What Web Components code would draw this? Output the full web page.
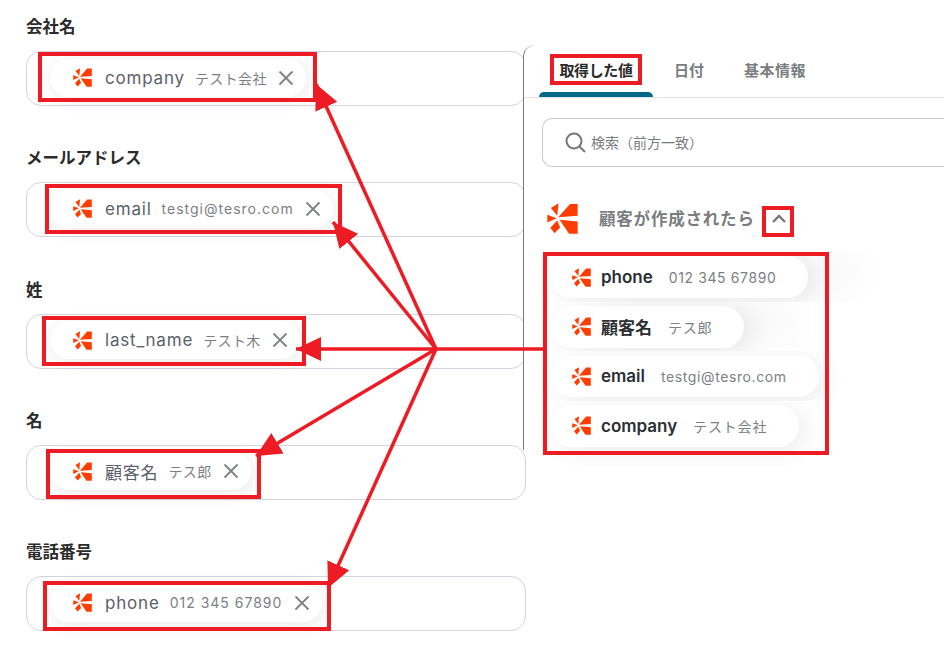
<!DOCTYPE html>
<html lang="ja">
<head>
<meta charset="utf-8">
<title>取得した値</title>
<style>
  html, body { margin: 0; padding: 0; background: #fff; }
  body {
    width: 944px;
    height: 656px;
    overflow: hidden;
    font-family: Inter, "Noto Sans CJK JP", sans-serif;
  }
</style>
</head>
<body>
<mapping-page>
  <field-list slot="left">
    <form-field label="会社名" inset="23"><value-chip name="company" value="テスト会社" removable></value-chip></form-field>
    <form-field label="メールアドレス" inset="23"><value-chip name="email" value="testgi@tesro.com" removable></value-chip></form-field>
    <form-field label="姓" inset="23"><value-chip name="last_name" value="テスト木" removable></value-chip></form-field>
    <form-field label="名" inset="23"><value-chip name="顧客名" value="テス郎" removable></value-chip></form-field>
    <form-field label="電話番号" inset="23"><value-chip name="phone" value="012 345 67890" removable></value-chip></form-field>
  </field-list>
  <output-panel slot="right">
    <value-chip name="phone" value="012 345 67890" strong wide></value-chip>
    <value-chip name="顧客名" value="テス郎" strong wide></value-chip>
    <value-chip name="email" value="testgi@tesro.com" strong></value-chip>
    <value-chip name="company" value="テスト会社" strong></value-chip>
  </output-panel>
</mapping-page>
<annotation-layer></annotation-layer>

<script>
  // ロゴは共通で使う
  class BrandMark extends HTMLElement {
    constructor() {
      super();
      const shadow = this.attachShadow({ mode: 'open' });
      const size = this.getAttribute('size') || 18;
      shadow.innerHTML = `
        <style>
          :host { display: inline-flex; flex: none; width: ${size}px; height: ${size}px; }
          svg { width: 100%; height: 100%; display: block; }
        </style>
        <svg viewBox="18 26 94 94" fill="#ff3d00">
          <polygon points="52,69 88,29 111,29 111,65"/>
          <polygon points="56,77 111,82 111,119 85,119"/>
          <polygon points="49,65 30,41 53,27"/>
          <polygon points="19,62 47,72 19,85"/>
          <polygon points="49,79 58,100 41,118 28,101"/>
        </svg>`;
    }
  }
  customElements.define('brand-mark', BrandMark);

  class ValueChip extends HTMLElement {
    constructor() {
      super();
      const shadow = this.attachShadow({ mode: 'open' });
      const removable = this.hasAttribute('removable');
      const strong = this.hasAttribute('strong');
      const value = this.getAttribute('value');
      // 英数字の値だけ字間を広げる
      const latin = /^[\x20-\x7e]+$/.test(value);
      const valueSpacing = latin ? (strong ? .6 : 1) : (strong ? .8 : .4);
      const shadowCss = strong
        ? `6px 4px 24px rgba(0, 0, 0, .08)${this.hasAttribute('wide') ? ', 50px -6px 40px rgba(0, 0, 0, .04)' : ''}`
        : '2px 3px 18px rgba(0, 0, 0, .09)';
      shadow.innerHTML = `
        <style>
          :host { display: inline-flex; }
          /* 右の一覧は行ごとに影が切れる */
          :host([strong]) {
            display: flex;
            overflow: hidden;
            padding: 4px 0 3.5px 17px;
          }
          :host([strong]:last-child) { padding-bottom: 20px; }
          .chip {
            display: inline-flex;
            align-items: center;
            background: #fff;
            border-radius: 22px;
            white-space: nowrap;
            height: ${strong ? 42 : 38}px;
            padding: 0 ${removable ? 11 : 32}px 0 ${strong ? 21 : 23}px;
            box-shadow: ${shadowCss};
          }
          .name {
            margin-left: ${strong ? 10 : 13}px;
            font-size: 17px;
            letter-spacing: ${strong ? 0 : .8}px;
            font-weight: ${strong ? 600 : 400};
            color: ${strong ? '#2b2f33' : '#5a6068'};
          }
          .value {
            margin-left: ${strong ? 16 : 10}px;
            font-size: 14px;
            letter-spacing: ${valueSpacing}px;
            color: #7b7f84;
          }
          svg { margin-left: 10.500px; width: 18px; height: 18px; display: block; }
        </style>
        <div class="chip">
          <brand-mark size="19"></brand-mark>
          <span class="name">${this.getAttribute('name')}</span>
          <span class="value">${value}</span>
          ${removable ? `<svg viewBox="0 0 18 18" fill="none" stroke="#7f8184" stroke-width="1.8"><path d="M2.5 2.5l13 13M15.500 2.500l-13 13"/></svg>` : ''}
        </div>`;
    }
  }
  customElements.define('value-chip', ValueChip);

  class FormField extends HTMLElement {
    constructor() {
      super();
      const shadow = this.attachShadow({ mode: 'open' });
      shadow.innerHTML = `
        <style>
          :host { display: block; }
          label {
            display: block;
            height: 24px;
            line-height: 24px;
            font-size: 16.5px;
            font-weight: 700;
            color: #2b2b2b;
          }
          .box {
            display: flex;
            align-items: center;
            box-sizing: border-box;
            height: 55px;
            margin-top: 12px;
            padding: 0 0 2px ${this.getAttribute('inset')}px;
            border: 1px solid #d0d4dc;
            border-radius: 15px;
            background: #fff;
          }
        </style>
        <label>${this.getAttribute('label')}</label>
        <div class="box"><slot></slot></div>`;
    }
  }
  customElements.define('form-field', FormField);

  class FieldList extends HTMLElement {
    constructor() {
      super();
      this.attachShadow({ mode: 'open' }).innerHTML = `
        <style>
          :host {
            display: flex;
            flex-direction: column;
            gap: 40.25px;
            box-sizing: border-box;
            width: 526px;
            padding: 15px 0 0 26px;
          }
        </style>
        <slot></slot>`;
    }
  }
  customElements.define('field-list', FieldList);

  class OutputPanel extends HTMLElement {
    constructor() {
      super();
      this.attachShadow({ mode: 'open' }).innerHTML = `
        <style>
          :host {
            display: block;
            box-sizing: border-box;
            height: 405px;
            margin: 45px 0 0 -3px;
            border-left: 1px solid #77797c;
            border-top-left-radius: 12px;
            background: #fff;
            position: relative;
            color: #7a7d80;
          }
          .tabs {
            display: flex;
            height: 52px;
            padding-left: 15px;
            border-bottom: 1px solid #e2e4e6;
            font-size: 15px;
            font-weight: 700;
          }
          .tab { display: flex; align-items: center; padding-bottom: 3px; box-sizing: border-box; }
          .tab.active {
            position: relative;
            width: 114px;
            justify-content: center;
            letter-spacing: -.4px;
            color: #2b2b2b;
          }
          .tab.active::after {
            content: "";
            position: absolute;
            left: 0;
            right: 0;
            bottom: 0;
            height: 5px;
            border-radius: 5px 5px 0 0;
            background: #006a86;
          }
          .tab.date { margin-left: 21px; }
          .tab.info { margin-left: 40px; letter-spacing: .5px; }
          .search {
            display: flex;
            align-items: center;
            gap: 5px;
            box-sizing: border-box;
            height: 49px;
            margin: 20px 0 0 18px;
            padding: 0 0 1px 22px;
            border: 1px solid #c9cbce;
            border-right: 0;
            border-radius: 10px 0 0 10px;
            font-size: 14px;
          }
          .search svg { width: 21px; height: 21px; }
          .head {
            display: flex;
            align-items: center;
            height: 34px;
            margin: 34px 0 0 23px;
            font-size: 16.500px;
            letter-spacing: .8px;
            font-weight: 700;
          }
          .head span { margin-left: 21px; }
          .head svg { width: 14px; height: 9px; margin-left: 17px; }
          .list {
            display: flex;
            flex-direction: column;
            margin: 17px 0 0 10px;
          }
        </style>
        <div class="tabs">
          <div class="tab active">取得した値</div>
          <div class="tab date">日付</div>
          <div class="tab info">基本情報</div>
        </div>
        <div class="search">
          <svg viewBox="0 0 21 21" fill="none" stroke="#747679" stroke-width="2"><circle cx="9" cy="9" r="7.500"/><path d="M14.500 14.500l5.500 5.500"/></svg>
          検索（前方一致）
        </div>
        <div class="head">
          <brand-mark size="31"></brand-mark>
          <span>顧客が作成されたら</span>
          <svg viewBox="0 0 14 9" fill="none" stroke="#747679" stroke-width="2.400"><path d="M1 8l6-6 6 6"/></svg>
        </div>
        <div class="list"><slot></slot></div>`;
    }
  }
  customElements.define('output-panel', OutputPanel);

  class MappingPage extends HTMLElement {
    constructor() {
      super();
      this.attachShadow({ mode: 'open' }).innerHTML = `
        <style>
          :host { display: flex; align-items: flex-start; width: 944px; height: 656px; overflow: hidden; }
          ::slotted([slot="right"]) { flex: 1; }
        </style>
        <slot name="left"></slot>
        <slot name="right"></slot>`;
    }
  }
  customElements.define('mapping-page', MappingPage);

  // 赤枠と矢印は画面全体の上に重ねる注釈
  class AnnotationLayer extends HTMLElement {
    constructor() {
      super();
      const boxes = [
        [40, 54, 275, 46], [47, 186, 293, 46], [44, 318, 260, 46], [48, 451, 211, 46], [45, 583, 284, 46],
        [552, 56, 88, 27], [764, 208, 28, 27], [545, 254, 282, 199]
      ];
      const arrows = [[316, 84], [333, 222], [296, 349], [256, 456], [328, 588]];
      this.attachShadow({ mode: 'open' }).innerHTML = `
        <style>
          :host { position: absolute; left: 0; top: 0; width: 944px; height: 656px; pointer-events: none; }
          svg { display: block; }
        </style>
        <svg width="944" height="656" fill="none" stroke="#ed1c24" stroke-width="3.500">
          <defs>
            <marker id="head" markerUnits="userSpaceOnUse" markerWidth="26" markerHeight="26" refX="25" refY="13" orient="auto">
              <path d="M0 1L25 13L0 25z" fill="#ed1c24" stroke="none"/>
            </marker>
          </defs>
          ${boxes.map(b => `<rect x="${b[0]}" y="${b[1]}" width="${b[2]}" height="${b[3]}" stroke-width="4"/>`).join('')}
          <path d="M545 349H436"/>
          ${arrows.map(a => `<line x1="436" y1="349" x2="${a[0]}" y2="${a[1]}" marker-end="url(#head)"/>`).join('')}
        </svg>`;
    }
  }
  customElements.define('annotation-layer', AnnotationLayer);
</script>
</body>
</html>
